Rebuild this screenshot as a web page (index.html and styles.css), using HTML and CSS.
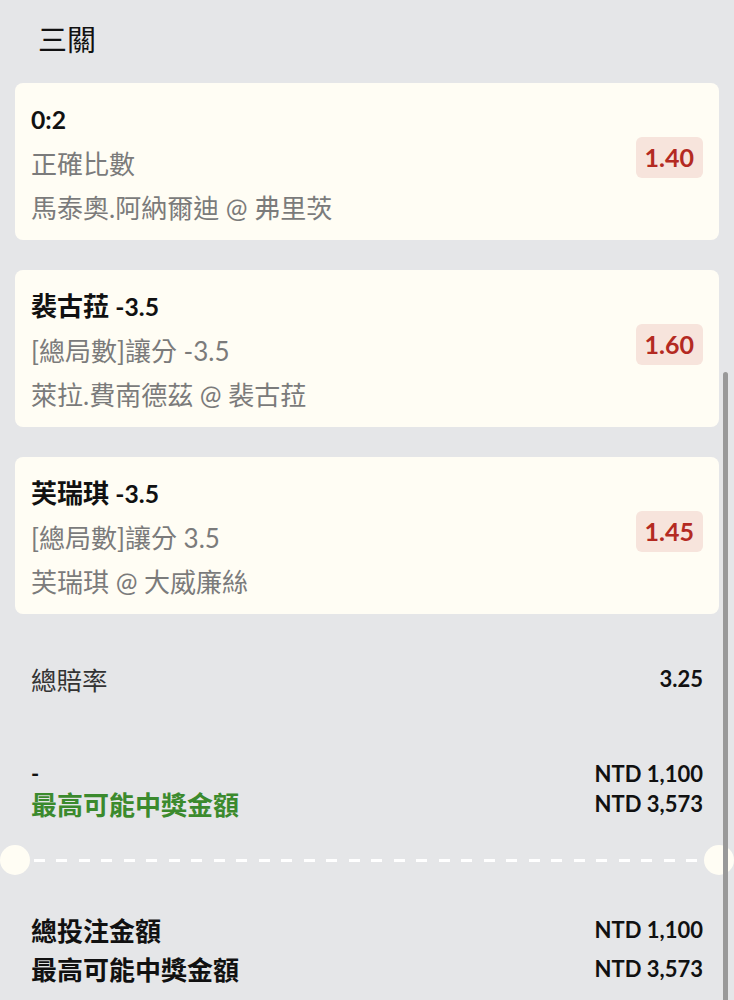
FILE: index.html
```html
<!DOCTYPE html>
<html lang="zh-Hant">

<head>
    <meta charset="UTF-8">
    <meta name="viewport" content="width=device-width, initial-scale=1.0">
    <title>三關</title>
    <link rel="stylesheet" href="styles.css">
</head>

<body>
    <div class="slip">
        <h2 class="slip-title">三關</h2>

        <div class="bet-list">
            <div class="bet-card">
                <div class="bet-info">
                    <div class="bet-pick"><span class="en">0:2</span></div>
                    <div class="bet-line">正確比數</div>
                    <div class="bet-line">馬泰奧.阿納爾迪 @ 弗里茨</div>
                </div>
                <div class="bet-odds">1.40</div>
            </div>

            <div class="bet-card">
                <div class="bet-info">
                    <div class="bet-pick">裴古菈 <span class="en">-3.5</span></div>
                    <div class="bet-line">[總局數]讓分 -3.5</div>
                    <div class="bet-line">萊拉.費南德茲 @ 裴古菈</div>
                </div>
                <div class="bet-odds">1.60</div>
            </div>

            <div class="bet-card">
                <div class="bet-info">
                    <div class="bet-pick">芙瑞琪 <span class="en">-3.5</span></div>
                    <div class="bet-line">[總局數]讓分 3.5</div>
                    <div class="bet-line">芙瑞琪 @ 大威廉絲</div>
                </div>
                <div class="bet-odds">1.45</div>
            </div>
        </div>

        <div class="total-odds">
            <span>總賠率</span>
            <span class="amount">3.25</span>
        </div>

        <div class="stake-rows">
            <div class="row">
                <span class="dash-label">-</span>
                <span class="amount">NTD 1,100</span>
            </div>
            <div class="row">
                <span class="win-label">最高可能中獎金額</span>
                <span class="amount">NTD 3,573</span>
            </div>
        </div>

        <div class="divider">
            <span class="notch"></span>
            <span class="dashes"></span>
            <span class="notch"></span>
        </div>

        <div class="summary">
            <div class="row">
                <span>總投注金額</span>
                <span class="amount">NTD 1,100</span>
            </div>
            <div class="row">
                <span>最高可能中獎金額</span>
                <span class="amount">NTD 3,573</span>
            </div>
        </div>
    </div>

    <div class="scroll-thumb"></div>
</body>

</html>
```

FILE: styles.css
```css
body {
    font-family: Lato, "Noto Sans CJK TC", sans-serif;
    margin: 0;
    padding: 0;
    background-color: #e5e6e8;
    color: #111;
    overflow: hidden;
}

.slip {
    width: 734px;
}

.slip-title {
    margin: 0;
    padding: 20px 38px 0;
    height: 40px;
    line-height: 40px;
    font-size: 29px;
    font-weight: normal;
    margin-bottom: 23px;
}

.bet-list {
    display: flex;
    flex-direction: column;
    gap: 30px;
    padding: 0 15px;
}

.bet-card {
    display: flex;
    justify-content: space-between;
    align-items: center;
    height: 157px;
    box-sizing: border-box;
    padding: 14px 16px 11px;
    background: #fffdf4;
    border-radius: 8px;
}

.bet-info {
    line-height: 44px;
}

.bet-pick {
    font-size: 26px;
    font-weight: bold;
    color: #111;
}

.bet-line {
    font-size: 26px;
    color: #7b7b7b;
}

.en {
    font-size: 0.95em;
}

.bet-odds {
    height: 41px;
    line-height: 41px;
    padding: 0 9px;
    margin-bottom: 11px;
    border-radius: 6px;
    background: #f7e4dc;
    color: #b42a22;
    font-size: 25px;
    font-weight: bold;
}

.total-odds {
    display: flex;
    justify-content: space-between;
    align-items: center;
    height: 44px;
    margin-top: 42px;
    padding: 0 31px;
    font-size: 25.5px;
    color: #333;
}

.amount {
    font-size: 22px;
    font-weight: bold;
    color: #111;
}

.stake-rows {
    margin-top: 58px;
    padding: 0 31px;
}

.row {
    display: flex;
    justify-content: space-between;
    align-items: center;
}

.stake-rows .row {
    height: 30px;
}

.dash-label {
    font-size: 22px;
    font-weight: bold;
}

.win-label {
    font-size: 26px;
    font-weight: bold;
    color: #3b8a2d;
}

.divider {
    display: flex;
    align-items: center;
    margin-top: 27px;
    height: 30px;
}

.notch {
    width: 30px;
    height: 30px;
    border-radius: 50%;
    background: #fffdf4;
}

.dashes {
    flex: 1;
    height: 3px;
    margin: 0 4px;
    background: repeating-linear-gradient(90deg, #fff 0 11px, transparent 11px 22.5px);
}

.summary {
    margin-top: 35px;
    padding: 0 31px;
}

.summary .row {
    height: 39px;
    font-size: 26px;
    font-weight: bold;
}

.scroll-thumb {
    position: fixed;
    top: 372px;
    right: 6px;
    bottom: 0;
    width: 5px;
    border-radius: 3px 3px 0 0;
    background: #999;
}
```
